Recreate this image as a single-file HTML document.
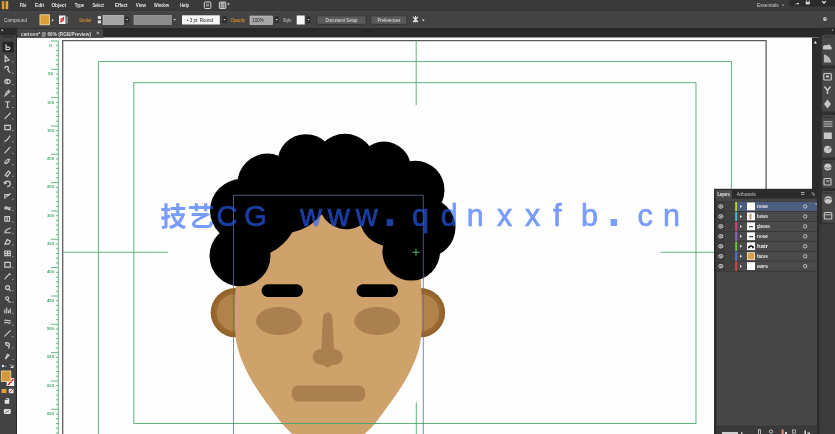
<!DOCTYPE html>
<html lang="zh"><head><meta charset="utf-8"><title>cartoon</title>
<style>html,body{margin:0;padding:0;background:#fff;overflow:hidden}body{width:835px;height:434px;position:relative;font-family:"Liberation Sans","Noto Sans CJK SC",sans-serif}svg{position:absolute;left:0;top:0;display:block}text{font-family:"Liberation Sans","Noto Sans CJK SC",sans-serif}</style></head><body>
<svg width="835" height="434" viewBox="0 0 835 434">
<defs><filter id="bl" x="-5%" y="-5%" width="110%" height="110%"><feGaussianBlur stdDeviation="0.35"/></filter><filter id="bt" x="-5%" y="-20%" width="110%" height="140%"><feGaussianBlur stdDeviation="0.45"/></filter><radialGradient id="ear" cx="50%" cy="50%" r="50%"><stop offset="0.72" stop-color="#a06c34"/><stop offset="1" stop-color="#925f28"/></radialGradient></defs>
<rect x="0" y="0" width="835" height="434" fill="#fefefe"/>
<g stroke="#56b077" stroke-width="0.9" fill="none">
<line x1="58.3" y1="40.5" x2="58.3" y2="434"/>
<line x1="51" y1="41" x2="58.3" y2="41"/>
<line x1="56" y1="45.7" x2="58.3" y2="45.7"/>
<line x1="56" y1="50.4" x2="58.3" y2="50.4"/>
<line x1="56" y1="55.2" x2="58.3" y2="55.2"/>
<line x1="56" y1="59.9" x2="58.3" y2="59.9"/>
<line x1="56" y1="64.6" x2="58.3" y2="64.6"/>
<line x1="51" y1="69.3" x2="58.3" y2="69.3"/>
<line x1="56" y1="74.1" x2="58.3" y2="74.1"/>
<line x1="56" y1="78.8" x2="58.3" y2="78.8"/>
<line x1="56" y1="83.5" x2="58.3" y2="83.5"/>
<line x1="56" y1="88.2" x2="58.3" y2="88.2"/>
<line x1="56" y1="92.9" x2="58.3" y2="92.9"/>
<line x1="51" y1="97.7" x2="58.3" y2="97.7"/>
<line x1="56" y1="102.4" x2="58.3" y2="102.4"/>
<line x1="56" y1="107.1" x2="58.3" y2="107.1"/>
<line x1="56" y1="111.8" x2="58.3" y2="111.8"/>
<line x1="56" y1="116.5" x2="58.3" y2="116.5"/>
<line x1="56" y1="121.3" x2="58.3" y2="121.3"/>
<line x1="51" y1="126" x2="58.3" y2="126"/>
<line x1="56" y1="130.7" x2="58.3" y2="130.7"/>
<line x1="56" y1="135.4" x2="58.3" y2="135.4"/>
<line x1="56" y1="140.2" x2="58.3" y2="140.2"/>
<line x1="56" y1="144.9" x2="58.3" y2="144.9"/>
<line x1="56" y1="149.6" x2="58.3" y2="149.6"/>
<line x1="51" y1="154.3" x2="58.3" y2="154.3"/>
<line x1="56" y1="159" x2="58.3" y2="159"/>
<line x1="56" y1="163.8" x2="58.3" y2="163.8"/>
<line x1="56" y1="168.5" x2="58.3" y2="168.5"/>
<line x1="56" y1="173.2" x2="58.3" y2="173.2"/>
<line x1="56" y1="177.9" x2="58.3" y2="177.9"/>
<line x1="51" y1="182.6" x2="58.3" y2="182.6"/>
<line x1="56" y1="187.4" x2="58.3" y2="187.4"/>
<line x1="56" y1="192.1" x2="58.3" y2="192.1"/>
<line x1="56" y1="196.8" x2="58.3" y2="196.8"/>
<line x1="56" y1="201.5" x2="58.3" y2="201.5"/>
<line x1="56" y1="206.3" x2="58.3" y2="206.3"/>
<line x1="51" y1="211" x2="58.3" y2="211"/>
<line x1="56" y1="215.7" x2="58.3" y2="215.7"/>
<line x1="56" y1="220.4" x2="58.3" y2="220.4"/>
<line x1="56" y1="225.1" x2="58.3" y2="225.1"/>
<line x1="56" y1="229.9" x2="58.3" y2="229.9"/>
<line x1="56" y1="234.6" x2="58.3" y2="234.6"/>
<line x1="51" y1="239.3" x2="58.3" y2="239.3"/>
<line x1="56" y1="244" x2="58.3" y2="244"/>
<line x1="56" y1="248.8" x2="58.3" y2="248.8"/>
<line x1="56" y1="253.5" x2="58.3" y2="253.5"/>
<line x1="56" y1="258.2" x2="58.3" y2="258.2"/>
<line x1="56" y1="262.9" x2="58.3" y2="262.9"/>
<line x1="51" y1="267.6" x2="58.3" y2="267.6"/>
<line x1="56" y1="272.4" x2="58.3" y2="272.4"/>
<line x1="56" y1="277.1" x2="58.3" y2="277.1"/>
<line x1="56" y1="281.8" x2="58.3" y2="281.8"/>
<line x1="56" y1="286.5" x2="58.3" y2="286.5"/>
<line x1="56" y1="291.2" x2="58.3" y2="291.2"/>
<line x1="51" y1="296" x2="58.3" y2="296"/>
<line x1="56" y1="300.7" x2="58.3" y2="300.7"/>
<line x1="56" y1="305.4" x2="58.3" y2="305.4"/>
<line x1="56" y1="310.1" x2="58.3" y2="310.1"/>
<line x1="56" y1="314.9" x2="58.3" y2="314.9"/>
<line x1="56" y1="319.6" x2="58.3" y2="319.6"/>
<line x1="51" y1="324.3" x2="58.3" y2="324.3"/>
<line x1="56" y1="329" x2="58.3" y2="329"/>
<line x1="56" y1="333.7" x2="58.3" y2="333.7"/>
<line x1="56" y1="338.5" x2="58.3" y2="338.5"/>
<line x1="56" y1="343.2" x2="58.3" y2="343.2"/>
<line x1="56" y1="347.9" x2="58.3" y2="347.9"/>
<line x1="51" y1="352.6" x2="58.3" y2="352.6"/>
<line x1="56" y1="357.4" x2="58.3" y2="357.4"/>
<line x1="56" y1="362.1" x2="58.3" y2="362.1"/>
<line x1="56" y1="366.8" x2="58.3" y2="366.8"/>
<line x1="56" y1="371.5" x2="58.3" y2="371.5"/>
<line x1="56" y1="376.2" x2="58.3" y2="376.2"/>
<line x1="51" y1="381" x2="58.3" y2="381"/>
<line x1="56" y1="385.7" x2="58.3" y2="385.7"/>
<line x1="56" y1="390.4" x2="58.3" y2="390.4"/>
<line x1="56" y1="395.1" x2="58.3" y2="395.1"/>
<line x1="56" y1="399.8" x2="58.3" y2="399.8"/>
<line x1="56" y1="404.6" x2="58.3" y2="404.6"/>
<line x1="51" y1="409.3" x2="58.3" y2="409.3"/>
<line x1="56" y1="414" x2="58.3" y2="414"/>
<line x1="56" y1="418.7" x2="58.3" y2="418.7"/>
<line x1="56" y1="423.5" x2="58.3" y2="423.5"/>
<line x1="56" y1="428.2" x2="58.3" y2="428.2"/>
<line x1="56" y1="432.9" x2="58.3" y2="432.9"/>
<line x1="51" y1="437.6" x2="58.3" y2="437.6"/>
<line x1="56" y1="442.3" x2="58.3" y2="442.3"/>
<line x1="56" y1="447.1" x2="58.3" y2="447.1"/>
<line x1="56" y1="451.8" x2="58.3" y2="451.8"/>
<line x1="56" y1="456.5" x2="58.3" y2="456.5"/>
<line x1="56" y1="461.2" x2="58.3" y2="461.2"/>
</g>
<g fill="#3fa864" font-size="4.3" font-weight="bold" text-anchor="middle" filter="url(#bl)">
<text x="50.5" y="46.8" textLength="3" lengthAdjust="spacingAndGlyphs">0</text>
<text x="50.5" y="75.1" textLength="5" lengthAdjust="spacingAndGlyphs">50</text>
<text x="50.5" y="103.5" textLength="7" lengthAdjust="spacingAndGlyphs">100</text>
<text x="50.5" y="131.8" textLength="7" lengthAdjust="spacingAndGlyphs">150</text>
<text x="50.5" y="160.1" textLength="7" lengthAdjust="spacingAndGlyphs">200</text>
<text x="50.5" y="188.4" textLength="7" lengthAdjust="spacingAndGlyphs">250</text>
<text x="50.5" y="216.8" textLength="7" lengthAdjust="spacingAndGlyphs">300</text>
<text x="50.5" y="245.1" textLength="7" lengthAdjust="spacingAndGlyphs">350</text>
<text x="50.5" y="273.4" textLength="7" lengthAdjust="spacingAndGlyphs">400</text>
<text x="50.5" y="301.8" textLength="7" lengthAdjust="spacingAndGlyphs">450</text>
<text x="50.5" y="330.1" textLength="7" lengthAdjust="spacingAndGlyphs">500</text>
<text x="50.5" y="358.4" textLength="7" lengthAdjust="spacingAndGlyphs">550</text>
<text x="50.5" y="386.8" textLength="7" lengthAdjust="spacingAndGlyphs">600</text>
<text x="50.5" y="415.1" textLength="7" lengthAdjust="spacingAndGlyphs">650</text>
</g>
<path d="M62.7 434V40.7H766.1V189" fill="none" stroke="#585858" stroke-width="1.25"/>
<g fill="none" stroke="#56b077" stroke-width="0.95">
<path d="M98.4 434V61.6H731.4V189"/>
<path d="M133.8 82.7H696V423.5H133.8Z"/>
<path d="M416.2 40.7V105"/>
<path d="M62.7 252.3H167.8M660.7 252.3H714"/>
<path d="M416.3 402.3V434"/>
</g>
<circle cx="235.3" cy="312.7" r="24.6" fill="url(#ear)"/>
<circle cx="235.3" cy="312.7" r="18.5" fill="#b2824c"/>
<circle cx="420.5" cy="312.7" r="24.6" fill="url(#ear)"/>
<circle cx="420.5" cy="312.7" r="18.5" fill="#b2824c"/>
<path d="M273.4 200C269.3 202.5 254.3 208.3 248.4 215C242.6 221.7 240.5 232.2 238.4 240C236.4 247.8 236.6 254 236.1 262C235.7 270 235.8 279.7 235.6 288C235.4 296.3 235.1 305 235 312C235 319 235 325 235.2 330C235.5 335 235.7 338 236.4 342C237.2 346 238.2 350 239.5 354C240.8 358 242.5 362 244.2 366C246 370 248 373.9 250.2 377.9C252.5 381.9 255 386 257.6 390C260.3 394 263.1 397.9 265.9 401.9C268.8 405.9 271.8 410 274.8 414C277.8 418 281 422.5 283.9 425.8C286.9 429.1 289.2 431.3 292.2 434C295.3 436.7 298.4 439.7 302.4 442C306.5 444.3 312.1 446.7 316.4 448C320.8 449.3 324.4 450 328.4 450C332.4 450 336.1 449.3 340.4 448C344.8 446.7 350.4 444.3 354.4 442C358.5 439.7 361.6 436.7 364.6 434C367.7 431.3 370 429.1 372.9 425.8C375.9 422.5 379.1 418 382.1 414C385.1 410 388.1 405.9 390.9 401.9C393.8 397.9 396.6 394 399.2 390C401.9 386 404.4 381.9 406.6 377.9C408.9 373.9 410.9 370 412.6 366C414.4 362 416.1 358 417.4 354C418.7 350 419.7 346 420.4 342C421.2 338 421.4 335 421.6 330C421.9 325 421.9 319 421.9 312C421.8 305 421.5 296.3 421.3 288C421.1 279.7 421.2 270 420.8 262C420.3 254 420.5 247.8 418.4 240C416.4 232.2 414.3 221.7 408.4 215C402.6 208.3 387.6 202.5 383.4 200Z" fill="#cfa26b"/>
<ellipse cx="279" cy="321" rx="23" ry="14" fill="#aa804f"/>
<ellipse cx="377.2" cy="321" rx="23" ry="14" fill="#aa804f"/>
<path d="M327.7 312.6c-3 0-4.6 2.4-4.8 6l-1.6 30.5c-4.5 0.3-8.6 3-8.6 8.2 0 5 4.5 7.6 9.5 7.6 2.5 0 3.5 2.3 5.5 2.3s3-2.3 5.5-2.3c5 0 9.5-2.6 9.5-7.6 0-5.2-4.1-7.9-8.6-8.2l-1.6-30.5c-0.2-3.6-1.8-6-4.8-6z" fill="#aa804f"/>
<rect x="291.8" y="385.6" width="73.4" height="15.8" rx="6.5" fill="#aa804f"/>
<rect x="261.5" y="284.3" width="41.5" height="12.6" rx="6.3" fill="#000"/>
<rect x="356.5" y="284.3" width="41.5" height="12.6" rx="6.3" fill="#000"/>
<g fill="#000">
<circle cx="305.9" cy="162.7" r="28.5"/>
<circle cx="344.9" cy="164.8" r="31"/>
<circle cx="384" cy="168.6" r="27"/>
<circle cx="415.2" cy="190" r="29.3"/>
<circle cx="425.5" cy="227.6" r="30"/>
<circle cx="411.2" cy="251.8" r="28.8"/>
<circle cx="267.4" cy="183.6" r="30"/>
<circle cx="241.5" cy="210.5" r="31.5"/>
<circle cx="240" cy="255.8" r="30.5"/>
<path d="M270 253A55 55 0 0 0 292.4 232.2A50 50 0 0 0 321.7 214.3A28 28 0 0 0 360.8 225.2A30 30 0 0 0 382.2 245.3L420 250L430 200L390 160L300 155L250 190L235 250Z"/>
</g>
<path d="M233.5 434V195.3H423.3V434" fill="none" stroke="#5c6b9a" stroke-width="0.8"/>
<path d="M280 423.5H380" stroke="#56a068" stroke-width="1.05" fill="none"/>
<path d="M412.5 252.3H419.5M416 248.8V255.8" stroke="#4fb870" stroke-width="1" fill="none"/>
<g fill="#2a62ff" opacity="0.63" text-anchor="middle">
<text x="173.5 201.1" y="226.3" font-size="26.5" font-weight="bold">技艺</text>
<text x="226.9 255.6" y="226.1" font-size="29" stroke="#2a62ff" stroke-width="0.7">CG</text>
<text x="310.9 338.7 366.8 390 420.5 449.3 475.3 504.6 532.6 557.2 589.5 613.9 645 671.4" y="226.1" font-size="30.5" stroke="#2a62ff" stroke-width="0.7">www<tspan font-size="46" font-weight="bold" stroke="none">.</tspan>qdnxxfb<tspan font-size="46" font-weight="bold" stroke="none">.</tspan>cn</text>
</g>
<g id="top">
<rect x="0" y="0" width="835" height="11.6" fill="#3a3a3a"/>
<rect x="0" y="10.7" width="835" height="0.9" fill="#2c2c2c"/>
<rect x="0" y="11.6" width="835" height="15.8" fill="#434343"/>
<rect x="0" y="11.6" width="835" height="0.7" fill="#4a4a4a"/>
<rect x="0" y="27.2" width="835" height="10.3" fill="#292929"/>
<rect x="17" y="37.3" width="795" height="0.7" fill="#9a9a9a"/>
<g filter="url(#bl)"><rect x="1.8" y="1.2" width="2.2" height="8" fill="#e09a35"/><rect x="4.4" y="1.2" width="1.3" height="8" fill="#a8702a"/><rect x="6" y="1.2" width="2.2" height="8" fill="#e8a840"/></g>
<g fill="#e6e6e6" font-size="5.6" font-weight="bold" filter="url(#bt)">
<text x="19.8" y="7.3" textLength="6.5" lengthAdjust="spacingAndGlyphs">File</text>
<text x="35" y="7.3" textLength="9" lengthAdjust="spacingAndGlyphs">Edit</text>
<text x="51.5" y="7.3" textLength="14.5" lengthAdjust="spacingAndGlyphs">Object</text>
<text x="74.7" y="7.3" textLength="9.5" lengthAdjust="spacingAndGlyphs">Type</text>
<text x="92.5" y="7.3" textLength="11.3" lengthAdjust="spacingAndGlyphs">Select</text>
<text x="115" y="7.3" textLength="12.5" lengthAdjust="spacingAndGlyphs">Effect</text>
<text x="135.8" y="7.3" textLength="10.2" lengthAdjust="spacingAndGlyphs">View</text>
<text x="154" y="7.3" textLength="15" lengthAdjust="spacingAndGlyphs">Window</text>
<text x="180" y="7.3" textLength="9.2" lengthAdjust="spacingAndGlyphs">Help</text>
</g>
<g filter="url(#bl)"><rect x="204.3" y="2" width="6.5" height="6.5" rx="1" fill="none" stroke="#d8d8d8" stroke-width="1"/><rect x="206" y="3.7" width="3" height="3" fill="#888"/>
<rect x="219.3" y="2" width="6.5" height="6.5" rx="0.8" fill="#777" stroke="#ddd" stroke-width="0.9"/><path d="M221 3.5h3M221 5.2h3M221 6.9h3" stroke="#eee" stroke-width="0.6"/><path d="M227.8 2.8l2 1.2-2 1.2z" fill="#ddd"/></g>
<rect x="789.5" y="0" width="45.5" height="6.5" fill="#2b2b2b"/>
<g filter="url(#bt)"><text x="757" y="7" font-size="5" fill="#c8c8c8" textLength="21.5" lengthAdjust="spacingAndGlyphs">Essentials</text><rect x="782.3" y="4.5" width="1.3" height="1.3" fill="#bbb"/>
<path d="M794.5 4.3l4.5-1.5v1.5z" fill="#eee"/><rect x="805.8" y="0.8" width="4" height="3.5" fill="#e8e8e8"/><rect x="806.8" y="0.8" width="2" height="1.5" fill="#444"/><path d="M822.2 1.2l1.8 2 1.8-2" stroke="#eee" stroke-width="1.2" fill="none"/></g>
</g>
<g id="ctrl">
<g filter="url(#bt)" font-size="5">
<text x="4" y="21.8" fill="#d5d5d5" textLength="23" lengthAdjust="spacingAndGlyphs">Compound</text>
<text x="79" y="21.8" fill="#f59a23" textLength="12.5" lengthAdjust="spacingAndGlyphs">Stroke</text>
<text x="230.5" y="21.8" fill="#f59a23" textLength="14.8" lengthAdjust="spacingAndGlyphs">Opacity</text>
<text x="283" y="21.8" fill="#d0d0d0" textLength="9" lengthAdjust="spacingAndGlyphs">Style:</text>
</g>
<g filter="url(#bl)">
<rect x="40" y="14.8" width="9.5" height="10" fill="#d9a033" stroke="#e8d9b0" stroke-width="0.9"/>
<path d="M51.8 18.8l2 1.5-2 1.5z" fill="#bfd0e8"/>
<rect x="59" y="15.5" width="6.5" height="8.5" fill="#f4f4f4"/><path d="M60.5 22.5l3.5-5.5" stroke="#d8202a" stroke-width="1.3"/><rect x="61" y="18.5" width="2.5" height="2.5" fill="none" stroke="#d8202a" stroke-width="0.7"/><rect x="66.3" y="16.5" width="1.6" height="7" fill="#8a8a8a"/>
<rect x="97.8" y="16" width="3.2" height="3" fill="#ddd"/><rect x="97.8" y="20.3" width="3.2" height="3" fill="#ddd"/>
<rect x="103" y="15.3" width="20.5" height="9.2" fill="#a4a4a4" stroke="#cfcfcf" stroke-width="0.6"/>
<rect x="125" y="16.8" width="4.2" height="6" fill="#2e2e2e"/><path d="M126 19l1.1 1.5 1.1-1.5z" fill="#ddd"/>
<rect x="134" y="15.3" width="37.5" height="9.2" fill="#8c8c8c" stroke="#a5a5a5" stroke-width="0.6"/>
<path d="M173.5 19l1.2 1.6 1.2-1.6z" fill="#ddd"/>
<rect x="182" y="15.3" width="37.8" height="9.2" fill="#f6f6f6"/>
<rect x="222.3" y="16.3" width="4.3" height="7" fill="#2e2e2e"/><path d="M223.3 19l1.2 1.6 1.2-1.6z" fill="#ddd"/>
<rect x="250" y="16" width="22.5" height="8.5" fill="#a6a6a6" stroke="#cdcdcd" stroke-width="0.6"/>
<rect x="274.5" y="16.3" width="4.3" height="7" fill="#2e2e2e"/><path d="M275.5 19l1.2 1.6 1.2-1.6z" fill="#ddd"/>
<rect x="296.7" y="15.5" width="8" height="9" fill="#f7f7f7"/>
<rect x="306.5" y="16.3" width="4" height="7" fill="#2e2e2e"/><path d="M307.4 19l1.1 1.6 1.1-1.6z" fill="#ddd"/>
<rect x="316.7" y="15.8" width="49.3" height="8.6" rx="1" fill="#5a5a5a" stroke="#303030" stroke-width="0.8"/>
<rect x="370.7" y="15.8" width="36" height="8.6" rx="1" fill="#5a5a5a" stroke="#303030" stroke-width="0.8"/>
<path d="M413 17l5 5M418 17l-5 5M415.5 16v3" stroke="#e0e0e0" stroke-width="1.1"/><circle cx="415.5" cy="20.8" r="1.6" fill="#ddd"/>
<path d="M422 19.5l1.3 1.7 1.3-1.7z" fill="#eee"/>
<circle cx="825" cy="19" r="1.9" fill="#cfcfcf"/><circle cx="825.5" cy="18.5" r="0.8" fill="#555"/>
</g>
<g filter="url(#bt)" font-size="4.6">
<text x="187" y="21.7" fill="#222" textLength="26" lengthAdjust="spacingAndGlyphs">• 3 pt. Round</text>
<text x="252.5" y="21.8" fill="#222" font-size="4.8" textLength="11" lengthAdjust="spacingAndGlyphs">100%</text>
<text x="325.5" y="21.8" fill="#e4e4e4" textLength="32" lengthAdjust="spacingAndGlyphs">Document Setup</text>
<text x="377.5" y="21.8" fill="#e4e4e4" textLength="23" lengthAdjust="spacingAndGlyphs">Preferences</text>
</g>
</g>
<g id="tab">
<rect x="17.2" y="28.6" width="86" height="9.2" fill="#464646"/>
<g filter="url(#bt)"><text x="21" y="35.6" font-size="5.2" fill="#dcdcdc" font-weight="bold" textLength="70" lengthAdjust="spacingAndGlyphs">cartoon* @ 66% (RGB/Preview)</text>
<path d="M96.7 31.8l2.2 2.4M98.9 31.8l-2.2 2.4" stroke="#ddd" stroke-width="0.7"/></g>
</g>
<g id="tools">
<rect x="0" y="27.8" width="16.6" height="407" fill="#434343"/>
<rect x="16" y="27.8" width="1" height="407" fill="#2a2a2a"/>
<rect x="0" y="27.8" width="16" height="7.5" fill="#2b2b2b"/>
<rect x="1.5" y="29.5" width="1.6" height="1.6" fill="#ccc"/>
<rect x="2" y="36.3" width="12" height="1" fill="#2d2d2d"/>
<rect x="2.6" y="41.8" width="11" height="10.4" rx="1" fill="#232323"/>
<g filter="url(#bl)" stroke="#cdcdcd" fill="none" stroke-width="1.5" stroke-linecap="round">
<path transform="translate(1.7 47.2) scale(0.78)" d="M5.5 -3.5v6.5h3.5c2 0 2-3 0-3h-3"/>
<path transform="translate(1.7 58.7) scale(0.78)" d="M4.5 -3.5l5 5.5-2.8 0.3-2.2 1.5z"/>
<path transform="translate(1.7 70.1) scale(0.78)" d="M4 -2.5a2.3 2.3 0 1 1 3.5 2l3 3.5"/>
<path transform="translate(1.7 81.5) scale(0.78)" d="M4 0a3.5 2.8 0 1 0 7 0a3.5 2.8 0 1 0-7 0M7 -2.5v5"/>
<path transform="translate(1.7 93) scale(0.78)" d="M4.5 3.5l1-3.5 3.5-3.5 1.5 1.5-3.5 3.5z"/>
<path transform="translate(1.7 104.5) scale(0.78)" d="M5 -3.5h5M7.5 -3.5v7M6.3 3.5h2.4"/>
<path transform="translate(1.7 115.9) scale(0.78)" d="M4 3.5l7-7"/>
<path transform="translate(1.7 127.3) scale(0.78)" d="M4 -2.5h7v5.5h-7z"/>
<path transform="translate(1.7 138.8) scale(0.78)" d="M4 3.5c2-1 5-4 6.5-7"/>
<path transform="translate(1.7 150.2) scale(0.78)" d="M4 3.5l6.5-7"/>
<path transform="translate(1.7 161.7) scale(0.78)" d="M4 2c0-3 3-5 6-5-1 3-3 6-6 5z"/>
<path transform="translate(1.7 173.1) scale(0.78)" d="M4.5 2.5l4-5 2.5 2-4 5z"/>
<path transform="translate(1.7 184.6) scale(0.78)" d="M4 -1a3.5 3.5 0 1 1 3.5 3.5M4 -1l-1-2M4 -1l2-1"/>
<path transform="translate(1.7 196.1) scale(0.78)" d="M4 3v-5h5M6 1l5-4"/>
<path transform="translate(1.7 207.5) scale(0.78)" d="M4 0c2-3 5 3 7 0M4 2c2-3 5 3 7 0"/>
<path transform="translate(1.7 218.9) scale(0.78)" d="M4 -3h6v6h-6zM7 -3v6"/>
<path transform="translate(1.7 230.4) scale(0.78)" d="M4 3c1-5 5-5 7-6M4 3h7"/>
<path transform="translate(1.7 241.8) scale(0.78)" d="M4 3l3-6 4 2-2 4z"/>
<path transform="translate(1.7 253.3) scale(0.78)" d="M4 -3h7v6h-7zM4 0h7M7.5 -3v6"/>
<path transform="translate(1.7 264.8) scale(0.78)" d="M4 -3h7v6h-7z"/>
<path transform="translate(1.7 276.2) scale(0.78)" d="M4 3.5l6-6.5 1 1"/>
<path transform="translate(1.7 287.6) scale(0.78)" d="M5 0a2.5 2.5 0 1 0 5 0a2.5 2.5 0 1 0-5 0M9 2l2 2"/>
<path transform="translate(1.7 299.1) scale(0.78)" d="M5 -1a2 2 0 1 0 4 0a2 2 0 1 0-4 0M8 2l3 2"/>
<path transform="translate(1.7 310.5) scale(0.78)" d="M4 3v-4M6.5 3v-6M9 3v-3M11 3v-5"/>
<path transform="translate(1.7 322) scale(0.78)" d="M4 -2c2-2 5 2 7 0M4 1c2-2 5 2 7 0"/>
<path transform="translate(1.7 333.4) scale(0.78)" d="M4 3.5l7-7"/>
<path transform="translate(1.7 344.9) scale(0.78)" d="M5 -3c0 3 1 4 3 4s2 2 1 3M6 -3c2 0 4 1 4 3"/>
<path transform="translate(1.7 356.3) scale(0.78)" d="M4.5 3.5l3-6 2 1z"/>
</g>
<g fill="#cfcfcf">
<rect x="12.4" y="61.3" width="1" height="1"/>
<rect x="12.4" y="72.7" width="1" height="1"/>
<rect x="12.4" y="84.1" width="1" height="1"/>
<rect x="12.4" y="95.6" width="1" height="1"/>
<rect x="12.4" y="107" width="1" height="1"/>
<rect x="12.4" y="118.5" width="1" height="1"/>
<rect x="12.4" y="129.9" width="1" height="1"/>
<rect x="12.4" y="141.4" width="1" height="1"/>
<rect x="12.4" y="152.8" width="1" height="1"/>
<rect x="12.4" y="164.3" width="1" height="1"/>
<rect x="12.4" y="175.7" width="1" height="1"/>
<rect x="12.4" y="187.2" width="1" height="1"/>
<rect x="12.4" y="198.7" width="1" height="1"/>
<rect x="12.4" y="210.1" width="1" height="1"/>
<rect x="12.4" y="221.5" width="1" height="1"/>
<rect x="12.4" y="233" width="1" height="1"/>
<rect x="12.4" y="244.4" width="1" height="1"/>
<rect x="12.4" y="255.9" width="1" height="1"/>
<rect x="12.4" y="267.4" width="1" height="1"/>
<rect x="12.4" y="278.8" width="1" height="1"/>
<rect x="12.4" y="290.2" width="1" height="1"/>
<rect x="12.4" y="301.7" width="1" height="1"/>
<rect x="12.4" y="313.1" width="1" height="1"/>
<rect x="12.4" y="324.6" width="1" height="1"/>
<rect x="12.4" y="336.1" width="1" height="1"/>
<rect x="12.4" y="347.5" width="1" height="1"/>
<rect x="12.4" y="358.9" width="1" height="1"/>
</g>
<g filter="url(#bl)"><circle cx="3" cy="366" r="1.2" fill="#e8e8e8"/><circle cx="5.5" cy="366.5" r="0.8" fill="#6aa0e0"/><path d="M10 364.5l3 3M13 365v2.5h-2.5" stroke="#e0e0e0" stroke-width="0.9" fill="none"/>
<rect x="6.7" y="378" width="7.5" height="8" fill="#f3f3f3"/><path d="M8 385l5.5-6" stroke="#d8202a" stroke-width="1.4"/>
<rect x="1.3" y="371" width="9.5" height="10.4" fill="#d29a3c" stroke="#e6cf9e" stroke-width="0.9"/>
<rect x="1.5" y="389" width="5" height="4" fill="#e0a040"/><rect x="8.8" y="388.8" width="4.7" height="4.4" fill="#f0f0f0"/><path d="M9.5 392.5l3.3-3.2" stroke="#d8202a" stroke-width="1"/>
<path d="M5 400h4v3.5h-4zM6 398.5h3v1.5" fill="#e4e4e4" stroke="#e4e4e4" stroke-width="0.5"/>
<rect x="3.8" y="409" width="7" height="5" rx="1.3" fill="#dcdcdc"/><path d="M5.5 412.5l3.5-2" stroke="#555" stroke-width="0.8"/></g>
</g>
<g id="dock">
<rect x="812" y="37.6" width="7.8" height="152" fill="#2c2c2c"/>
<path d="M813.8 43.5l1.6-2.5 1.6 2.5z" fill="#f0f0f0" filter="url(#bl)"/>
<rect x="819.7" y="27.8" width="15.3" height="407" fill="#3c3c3c"/>
<rect x="819.7" y="27.8" width="15.3" height="6.4" fill="#2a2a2a"/>
<rect x="819.7" y="34.2" width="15.3" height="190" fill="#2f2f2f"/>
<rect x="819.2" y="27.8" width="1" height="407" fill="#2a2a2a"/>
<path d="M831.5 29.5l1.5 0l0 1.5z" fill="#ddd"/>
<rect x="822" y="35" width="14" height="30.5" rx="1.5" fill="#474747"/>
<rect x="823.5" y="36.6" width="10" height="0.8" fill="#2c2c2c"/>
<rect x="822" y="68.7" width="14" height="42.8" rx="1.5" fill="#474747"/>
<rect x="823.5" y="70.3" width="10" height="0.8" fill="#2c2c2c"/>
<rect x="822" y="115" width="14" height="42.3" rx="1.5" fill="#474747"/>
<rect x="823.5" y="116.6" width="10" height="0.8" fill="#2c2c2c"/>
<rect x="822" y="160.2" width="14" height="27.8" rx="1.5" fill="#474747"/>
<rect x="823.5" y="161.8" width="10" height="0.8" fill="#2c2c2c"/>
<rect x="822" y="191" width="14" height="31.8" rx="1.5" fill="#474747"/>
<rect x="823.5" y="192.6" width="10" height="0.8" fill="#2c2c2c"/>
<g filter="url(#bl)" fill="#c6c6c6" stroke="none">
<path d="M823 48a2.5 2.5 0 0 1 4-2.5a2.2 2.2 0 0 1 4 1.5c1.5 0.5 1 2.5-0.5 2.5h-6c-1.5 0-2-1-1.5-1.5z"/>
<path d="M824 62.5v-8c3 0.5 6.5 3.5 7.5 8z" fill="#b8b8b8"/>
<rect x="823.8" y="73.5" width="7.5" height="6.5" rx="1" fill="none" stroke="#c6c6c6" stroke-width="1.2"/><rect x="826" y="75.5" width="3" height="2" />
<path d="M824.5 86.5l3 4 3-4M827.5 90v4" stroke="#c6c6c6" stroke-width="1.5" fill="none"/>
<path d="M827.5 99.5l3.5 4.5-3.5 4.5-3.5-4.5z"/>
<path d="M823.5 121.8h9M823.5 124h9M823.5 126.2h9" stroke="#c0c0c0" stroke-width="1.1"/>
<rect x="823.8" y="132.5" width="8" height="6.5" fill="#c8c8c8"/>
<circle cx="827.8" cy="149.5" r="3.8"/><path d="M827.8 149.5l3-2.5" stroke="#444" stroke-width="0.8"/>
<circle cx="827.8" cy="167" r="3.6"/><path d="M825 167a3 1.3 0 0 0 6 0" stroke="#555" stroke-width="0.7" fill="none"/>
<rect x="824" y="178.5" width="7" height="6.5" rx="1" fill="none" stroke="#c6c6c6" stroke-width="1.1"/><path d="M826 181h3.5" stroke="#c6c6c6" stroke-width="1"/>
<circle cx="828.2" cy="200" r="3.8"/><path d="M825 199.5c2-1.5 4-1.5 6.5 0" stroke="#555" stroke-width="0.9" fill="none"/>
<rect x="824.3" y="212.5" width="7.5" height="6.5" rx="1" fill="none" stroke="#c6c6c6" stroke-width="1.1"/><path d="M824.3 214.8h7.5" stroke="#c6c6c6" stroke-width="0.9"/>
</g>
</g>
<g id="layers">
<rect x="714" y="188.8" width="105.6" height="246" fill="#2b2b2b"/>
<rect x="716.4" y="198.6" width="100.6" height="227.2" fill="#474747"/>
<rect x="716.4" y="201.3" width="100.6" height="70.2" fill="#313131"/>
<rect x="715.7" y="190" width="16.3" height="8.6" fill="#4b4b4b"/>
<g filter="url(#bt)" font-size="4.8">
<text x="717.5" y="196.3" fill="#e8e8e8" font-weight="bold" textLength="12.5" lengthAdjust="spacingAndGlyphs">Layers</text>
<text x="736.7" y="196.3" fill="#c4c4c4" textLength="19" lengthAdjust="spacingAndGlyphs">Artboards</text>
<path d="M801 192.5h3.5M801 194.3h3.5" stroke="#ccc" stroke-width="0.8"/><path d="M811.5 193l2.3 0M812.5 194.8h2.5" stroke="#ccc" stroke-width="0.8"/>
</g>
<rect x="716.4" y="201.8" width="100.6" height="9.25" fill="#4a4a4a"/>
<rect x="716.4" y="201.8" width="9" height="9.25" fill="#3a3a3a"/>
<rect x="726" y="201.8" width="8.4" height="9.25" fill="#404040"/>
<rect x="737.5" y="201.8" width="79.5" height="9.25" fill="#4d5d7d"/>
<rect x="735.2" y="201.8" width="1.9" height="9.25" fill="#b5d23a"/>
<g filter="url(#bl)">
<ellipse cx="720.8" cy="206.47" rx="2.2" ry="1.7" fill="none" stroke="#e6e6e6" stroke-width="0.9"/><circle cx="720.8" cy="206.47" r="0.7" fill="#e6e6e6"/>
<path d="M740 204.97l2 1.5-2 1.5z" fill="#e8e8e8"/>
<rect x="747" y="202.5" width="8" height="7.8" fill="#fafafa"/>
<circle cx="805.2" cy="206.47" r="1.7" fill="none" stroke="#dcdcdc" stroke-width="0.8"/>
</g>
<text x="757" y="208.17" font-size="4.6" fill="#eaeaea" font-weight="bold" filter="url(#bt)" textLength="11" lengthAdjust="spacingAndGlyphs">nose</text>
<rect x="716.4" y="211.75" width="100.6" height="9.25" fill="#4a4a4a"/>
<rect x="716.4" y="211.75" width="9" height="9.25" fill="#3a3a3a"/>
<rect x="726" y="211.75" width="8.4" height="9.25" fill="#404040"/>
<rect x="735.2" y="211.75" width="1.9" height="9.25" fill="#45b8cc"/>
<g filter="url(#bl)">
<ellipse cx="720.8" cy="216.42" rx="2.2" ry="1.7" fill="none" stroke="#e6e6e6" stroke-width="0.9"/><circle cx="720.8" cy="216.42" r="0.7" fill="#e6e6e6"/>
<path d="M740 214.92l2 1.5-2 1.5z" fill="#e8e8e8"/>
<rect x="747" y="212.45" width="8" height="7.8" fill="#fafafa"/>
<rect x="749.5" y="213.75" width="2" height="5.5" fill="#c89a5c"/>
<circle cx="805.2" cy="216.42" r="1.7" fill="none" stroke="#dcdcdc" stroke-width="0.8"/>
</g>
<text x="757" y="218.12" font-size="4.6" fill="#eaeaea" font-weight="bold" filter="url(#bt)" textLength="11" lengthAdjust="spacingAndGlyphs">bows</text>
<rect x="716.4" y="221.7" width="100.6" height="9.25" fill="#4a4a4a"/>
<rect x="716.4" y="221.7" width="9" height="9.25" fill="#3a3a3a"/>
<rect x="726" y="221.7" width="8.4" height="9.25" fill="#404040"/>
<rect x="735.2" y="221.7" width="1.9" height="9.25" fill="#d2447e"/>
<g filter="url(#bl)">
<ellipse cx="720.8" cy="226.38" rx="2.2" ry="1.7" fill="none" stroke="#e6e6e6" stroke-width="0.9"/><circle cx="720.8" cy="226.38" r="0.7" fill="#e6e6e6"/>
<path d="M740 224.88l2 1.5-2 1.5z" fill="#e8e8e8"/>
<rect x="747" y="222.4" width="8" height="7.8" fill="#fafafa"/>
<rect x="749" y="226.07" width="4" height="1.2" fill="#444"/>
<circle cx="805.2" cy="226.38" r="1.7" fill="none" stroke="#dcdcdc" stroke-width="0.8"/>
</g>
<text x="757" y="228.07" font-size="4.6" fill="#eaeaea" font-weight="bold" filter="url(#bt)" textLength="13" lengthAdjust="spacingAndGlyphs">glasses</text>
<rect x="716.4" y="231.65" width="100.6" height="9.25" fill="#4a4a4a"/>
<rect x="716.4" y="231.65" width="9" height="9.25" fill="#3a3a3a"/>
<rect x="726" y="231.65" width="8.4" height="9.25" fill="#404040"/>
<rect x="735.2" y="231.65" width="1.9" height="9.25" fill="#8466c2"/>
<g filter="url(#bl)">
<ellipse cx="720.8" cy="236.32" rx="2.2" ry="1.7" fill="none" stroke="#e6e6e6" stroke-width="0.9"/><circle cx="720.8" cy="236.32" r="0.7" fill="#e6e6e6"/>
<path d="M740 234.82l2 1.5-2 1.5z" fill="#e8e8e8"/>
<rect x="747" y="232.35" width="8" height="7.8" fill="#fafafa"/>
<rect x="749" y="236.02" width="4" height="1.2" fill="#444"/>
<circle cx="805.2" cy="236.32" r="1.7" fill="none" stroke="#dcdcdc" stroke-width="0.8"/>
</g>
<text x="757" y="238.02" font-size="4.6" fill="#eaeaea" font-weight="bold" filter="url(#bt)" textLength="11" lengthAdjust="spacingAndGlyphs">nose</text>
<rect x="716.4" y="241.6" width="100.6" height="9.25" fill="#4a4a4a"/>
<rect x="716.4" y="241.6" width="9" height="9.25" fill="#3a3a3a"/>
<rect x="726" y="241.6" width="8.4" height="9.25" fill="#404040"/>
<rect x="735.2" y="241.6" width="1.9" height="9.25" fill="#66c232"/>
<g filter="url(#bl)">
<ellipse cx="720.8" cy="246.28" rx="2.2" ry="1.7" fill="none" stroke="#e6e6e6" stroke-width="0.9"/><circle cx="720.8" cy="246.28" r="0.7" fill="#e6e6e6"/>
<path d="M740 244.78l2 1.5-2 1.5z" fill="#e8e8e8"/>
<rect x="747" y="242.3" width="8" height="7.8" fill="#fafafa"/>
<path d="M748 248.28c0-4 6-4 6 0l-1.5 0c-0.5-2-2.5-2-3 0z" fill="#000"/>
<circle cx="805.2" cy="246.28" r="1.7" fill="none" stroke="#dcdcdc" stroke-width="0.8"/>
</g>
<text x="757" y="247.97" font-size="4.6" fill="#eaeaea" font-weight="bold" filter="url(#bt)" textLength="11" lengthAdjust="spacingAndGlyphs">hair</text>
<rect x="716.4" y="251.55" width="100.6" height="9.25" fill="#4a4a4a"/>
<rect x="716.4" y="251.55" width="9" height="9.25" fill="#3a3a3a"/>
<rect x="726" y="251.55" width="8.4" height="9.25" fill="#404040"/>
<rect x="735.2" y="251.55" width="1.9" height="9.25" fill="#5474d6"/>
<g filter="url(#bl)">
<ellipse cx="720.8" cy="256.23" rx="2.2" ry="1.7" fill="none" stroke="#e6e6e6" stroke-width="0.9"/><circle cx="720.8" cy="256.23" r="0.7" fill="#e6e6e6"/>
<path d="M740 254.73l2 1.5-2 1.5z" fill="#e8e8e8"/>
<rect x="747" y="252.25" width="8" height="7.8" fill="#fafafa"/>
<rect x="747.6" y="252.85" width="6.8" height="6.6" fill="#d6a04e"/>
<circle cx="805.2" cy="256.23" r="1.7" fill="none" stroke="#dcdcdc" stroke-width="0.8"/>
</g>
<text x="757" y="257.93" font-size="4.6" fill="#eaeaea" font-weight="bold" filter="url(#bt)" textLength="11" lengthAdjust="spacingAndGlyphs">faces</text>
<rect x="716.4" y="261.5" width="100.6" height="9.25" fill="#4a4a4a"/>
<rect x="716.4" y="261.5" width="9" height="9.25" fill="#3a3a3a"/>
<rect x="726" y="261.5" width="8.4" height="9.25" fill="#404040"/>
<rect x="735.2" y="261.5" width="1.9" height="9.25" fill="#d64444"/>
<g filter="url(#bl)">
<ellipse cx="720.8" cy="266.18" rx="2.2" ry="1.7" fill="none" stroke="#e6e6e6" stroke-width="0.9"/><circle cx="720.8" cy="266.18" r="0.7" fill="#e6e6e6"/>
<path d="M740 264.68l2 1.5-2 1.5z" fill="#e8e8e8"/>
<rect x="747" y="262.2" width="8" height="7.8" fill="#fafafa"/>
<circle cx="805.2" cy="266.18" r="1.7" fill="none" stroke="#dcdcdc" stroke-width="0.8"/>
</g>
<text x="757" y="267.88" font-size="4.6" fill="#eaeaea" font-weight="bold" filter="url(#bt)" textLength="11" lengthAdjust="spacingAndGlyphs">ears</text>
<path d="M815 203.5l1.6 0 0 1.6z" fill="#ddd"/>
<rect x="716.4" y="426.2" width="100.6" height="8" fill="#3a3a3a"/>
<g filter="url(#bl)"><rect x="722" y="432" width="16" height="3" fill="#cfcfcf"/><rect x="741" y="432.3" width="1.5" height="2" fill="#ddd"/>
<rect x="758.6" y="429.8" width="2" height="5" fill="none" stroke="#ddd" stroke-width="0.8"/><circle cx="771" cy="431.5" r="1.6" fill="none" stroke="#ddd" stroke-width="0.8"/>
<rect x="781.5" y="429.5" width="2.2" height="5" fill="#e08a70"/><rect x="785" y="432" width="2" height="2.5" fill="#ddd"/><rect x="792.5" y="430" width="3" height="3" fill="none" stroke="#ddd" stroke-width="0.7"/>
<rect x="804.5" y="430.5" width="1.5" height="4" fill="#ddd"/><rect x="807.5" y="432.5" width="2.5" height="2" fill="#ddd"/></g>
</g>
</svg></body></html>
